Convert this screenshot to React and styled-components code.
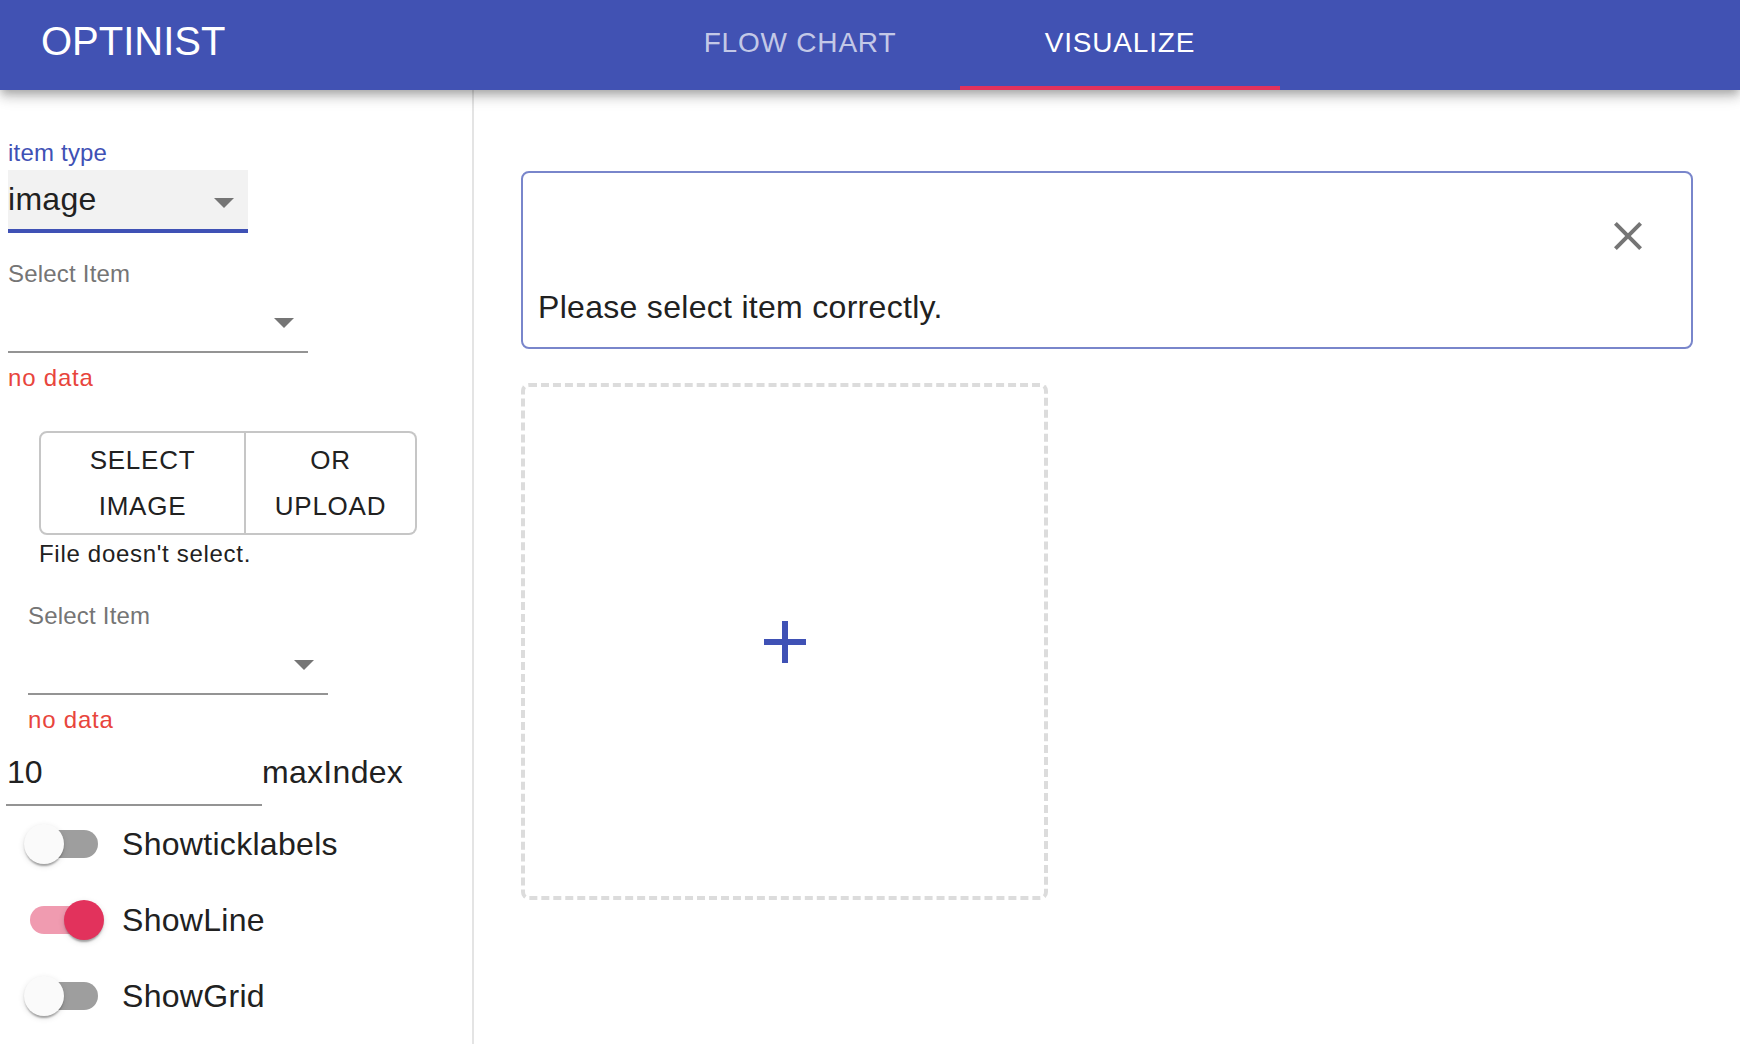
import React from "react";
import styled, { createGlobalStyle } from "styled-components";

const GlobalStyle = createGlobalStyle`
  * {
    box-sizing: border-box;
  }
  html,
  body {
    margin: 0;
    padding: 0;
    height: 100%;
    overflow: hidden;
    background: #fff;
  }
  body {
    font-family: "Liberation Sans", Helvetica, Arial, sans-serif;
    color: #212121;
  }
`;

const INDIGO = "#3f51b5";
const PINK = "#e2325c";

const App = () => {
  return (
    <Page>
      <GlobalStyle />
      <Header>
        <Brand>OPTINIST</Brand>
        <Tabs>
          <Tab>FLOW CHART</Tab>
          <Tab $active>VISUALIZE</Tab>
        </Tabs>
      </Header>

      <Body>
        <SidePanel>
          <Field $inset={8} $top={0}>
            <FieldLabel $focused>item type</FieldLabel>
            <Control $filled>
              <Value>image</Value>
              <Arrow $shift={6} />
            </Control>
          </Field>

          <Field $inset={8} $top={27}>
            <FieldLabel>Select Item</FieldLabel>
            <Control>
              <Value />
              <Arrow />
            </Control>
            <Helper>no data</Helper>
          </Field>

          <ButtonGroup>
            <GroupButton $width={207} $first>
              Select image
            </GroupButton>
            <GroupButton $width={171}>or upload</GroupButton>
          </ButtonGroup>
          <FileNote>File doesn't select.</FileNote>

          <Field $inset={28} $top={34}>
            <FieldLabel>Select Item</FieldLabel>
            <Control>
              <Value />
              <Arrow />
            </Control>
            <Helper>no data</Helper>
          </Field>

          <NumberRow>
            <NumberInput>10</NumberInput>
            <NumberLabel>maxIndex</NumberLabel>
          </NumberRow>

          <Toggle label="Showticklabels" />
          <Toggle label="ShowLine" on />
          <Toggle label="ShowGrid" />
        </SidePanel>

        <Main>
          <Alert>
            <AlertTop>
              <CloseButton aria-label="close">
                <svg width="48" height="48" viewBox="0 0 24 24">
                  <path
                    fill="#757575"
                    d="M19 6.41L17.59 5 12 10.59 6.41 5 5 6.41 10.59 12 5 17.59 6.41 19 12 13.41 17.59 19 19 17.59 13.41 12z"
                  />
                </svg>
              </CloseButton>
            </AlertTop>
            <AlertText>Please select item correctly.</AlertText>
          </Alert>

          <DropZone>
            <svg width="72" height="72" viewBox="0 0 24 24">
              <path fill={INDIGO} d="M19 13h-6v6h-2v-6H5v-2h6V5h2v6h6v2z" />
            </svg>
          </DropZone>
        </Main>
      </Body>
    </Page>
  );
};

const Arrow = ({ $shift = 0 }) => (
  <ArrowIcon $shift={$shift} width="20" height="10" viewBox="0 0 20 10">
    <path d="M0 0 L10 10 L20 0 Z" fill="#757575" />
  </ArrowIcon>
);

const Toggle = ({ label, on }) => (
  <SwitchRow>
    <SwitchRoot>
      <Track $on={on} />
      <Thumb $on={on} />
    </SwitchRoot>
    <SwitchLabel>{label}</SwitchLabel>
  </SwitchRow>
);

export default App;

const Page = styled.div`
  display: flex;
  flex-direction: column;
  height: 100vh;
`;

const Header = styled.header`
  display: flex;
  flex-shrink: 0;
  height: 90px;
  background: #4152b3;
  position: relative;
  z-index: 2;
  box-shadow: 0 4px 8px -2px rgba(0, 0, 0, 0.2),
    0 8px 10px 0 rgba(0, 0, 0, 0.14), 0 2px 20px 0 rgba(0, 0, 0, 0.12);
`;

const Brand = styled.div`
  flex: 0 0 640px;
  padding: 18px 0 0 41px;
  font-size: 40px;
  line-height: 46px;
  color: #fff;
`;

const Tabs = styled.nav`
  display: flex;
`;

const Tab = styled.div`
  width: 320px;
  height: 90px;
  padding-top: 27px;
  text-align: center;
  font-size: 28px;
  line-height: 32px;
  letter-spacing: 0.8px;
  color: ${(p) => (p.$active ? "#fff" : "rgba(255,255,255,0.7)")};
  border-bottom: 4px solid ${(p) => (p.$active ? PINK : "transparent")};
`;

const Body = styled.div`
  display: flex;
  flex: 1;
  min-height: 0;
`;

const SidePanel = styled.aside`
  flex: 0 0 474px;
  display: flex;
  flex-direction: column;
  align-items: flex-start;
  padding-top: 49px;
  border-right: 2px solid #e4e4e4;
`;

const Field = styled.div`
  display: flex;
  flex-direction: column;
  margin-left: ${(p) => p.$inset}px;
  margin-top: ${(p) => p.$top}px;
`;

const FieldLabel = styled.label`
  font-size: 24px;
  line-height: 28px;
  letter-spacing: 0.2px;
  color: ${(p) => (p.$focused ? INDIGO : "#757575")};
`;

const Control = styled.div`
  display: flex;
  align-items: center;
  justify-content: space-between;
  width: ${(p) => (p.$filled ? 240 : 300)}px;
  height: ${(p) => (p.$filled ? 63 : 65)}px;
  margin-top: ${(p) => (p.$filled ? 3 : 0)}px;
  padding-top: ${(p) => (p.$filled ? 0 : 6)}px;
  background: ${(p) => (p.$filled ? "#f2f2f2" : "transparent")};
  border-bottom: ${(p) => (p.$filled ? `4px solid ${INDIGO}` : "2px solid #949494")};
`;

const Value = styled.span`
  font-size: 32px;
  line-height: 37px;
  letter-spacing: 0.3px;
  color: #212121;
`;

const ArrowIcon = styled.svg`
  margin-right: 14px;
  margin-top: ${(p) => p.$shift}px;
`;

const Helper = styled.p`
  margin: 11px 0 0;
  font-size: 24px;
  line-height: 28px;
  letter-spacing: 0.8px;
  color: #e8453c;
`;

const ButtonGroup = styled.div`
  display: flex;
  margin: 39px 0 0 39px;
`;

const GroupButton = styled.button`
  width: ${(p) => p.$width}px;
  padding: 4px 18px;
  background: #fff;
  border: 2px solid #c6c6c6;
  border-left-width: ${(p) => (p.$first ? 2 : 0)}px;
  border-radius: ${(p) => (p.$first ? "8px 0 0 8px" : "0 8px 8px 0")};
  font-family: inherit;
  font-size: 26px;
  line-height: 46px;
  letter-spacing: 0.74px;
  text-transform: uppercase;
  color: #212121;
`;

const FileNote = styled.p`
  margin: 5px 0 0 39px;
  font-size: 24px;
  line-height: 28px;
  letter-spacing: 0.7px;
  color: #212121;
`;

const NumberRow = styled.div`
  display: flex;
  align-items: baseline;
  margin: 8px 0 0 6px;
`;

const NumberInput = styled.div`
  width: 256px;
  padding: 12px 0 13px 1px;
  font-size: 32px;
  line-height: 37px;
  border-bottom: 2px solid #949494;
`;

const NumberLabel = styled.span`
  font-size: 32px;
  line-height: 37px;
  letter-spacing: 0.3px;
`;

const SwitchRow = styled.div`
  display: flex;
  align-items: center;
  height: 76px;
  margin-left: 6px;
`;

const SwitchRoot = styled.span`
  position: relative;
  display: flex;
  align-items: center;
  flex-shrink: 0;
  width: 116px;
  height: 76px;
`;

const Track = styled.span`
  width: 68px;
  height: 28px;
  margin-left: 24px;
  border-radius: 14px;
  background: ${(p) => (p.$on ? "#f09bb0" : "#9e9e9e")};
`;

const Thumb = styled.span`
  position: absolute;
  top: 18px;
  left: ${(p) => (p.$on ? 58 : 18)}px;
  width: 40px;
  height: 40px;
  border-radius: 50%;
  background: ${(p) => (p.$on ? PINK : "#fafafa")};
  box-shadow: 0 4px 2px -2px rgba(0, 0, 0, 0.2), 0 2px 2px 0 rgba(0, 0, 0, 0.14),
    0 2px 6px 0 rgba(0, 0, 0, 0.12);
`;

const SwitchLabel = styled.span`
  font-size: 32px;
  line-height: 37px;
  letter-spacing: 0.3px;
  color: #212121;
`;

const Main = styled.main`
  flex: 1;
  display: flex;
  flex-direction: column;
  align-items: flex-start;
  padding: 81px 47px 0;
`;

const Alert = styled.section`
  align-self: stretch;
  border: 2px solid #7986cb;
  border-radius: 8px;
`;

const AlertTop = styled.div`
  display: flex;
  justify-content: flex-end;
  padding: 39px 39px 0 0;
`;

const CloseButton = styled.button`
  display: flex;
  padding: 0;
  border: none;
  background: none;
`;

const AlertText = styled.p`
  margin: 0;
  padding: 29px 15px 21px;
  font-size: 32px;
  line-height: 37px;
  letter-spacing: 0.3px;
  color: #212121;
`;

const DropZone = styled.div`
  display: flex;
  align-items: center;
  justify-content: center;
  width: 527px;
  height: 517px;
  margin-top: 34px;
  border: 4px dashed #dcdcdc;
  border-radius: 8px;
`;
